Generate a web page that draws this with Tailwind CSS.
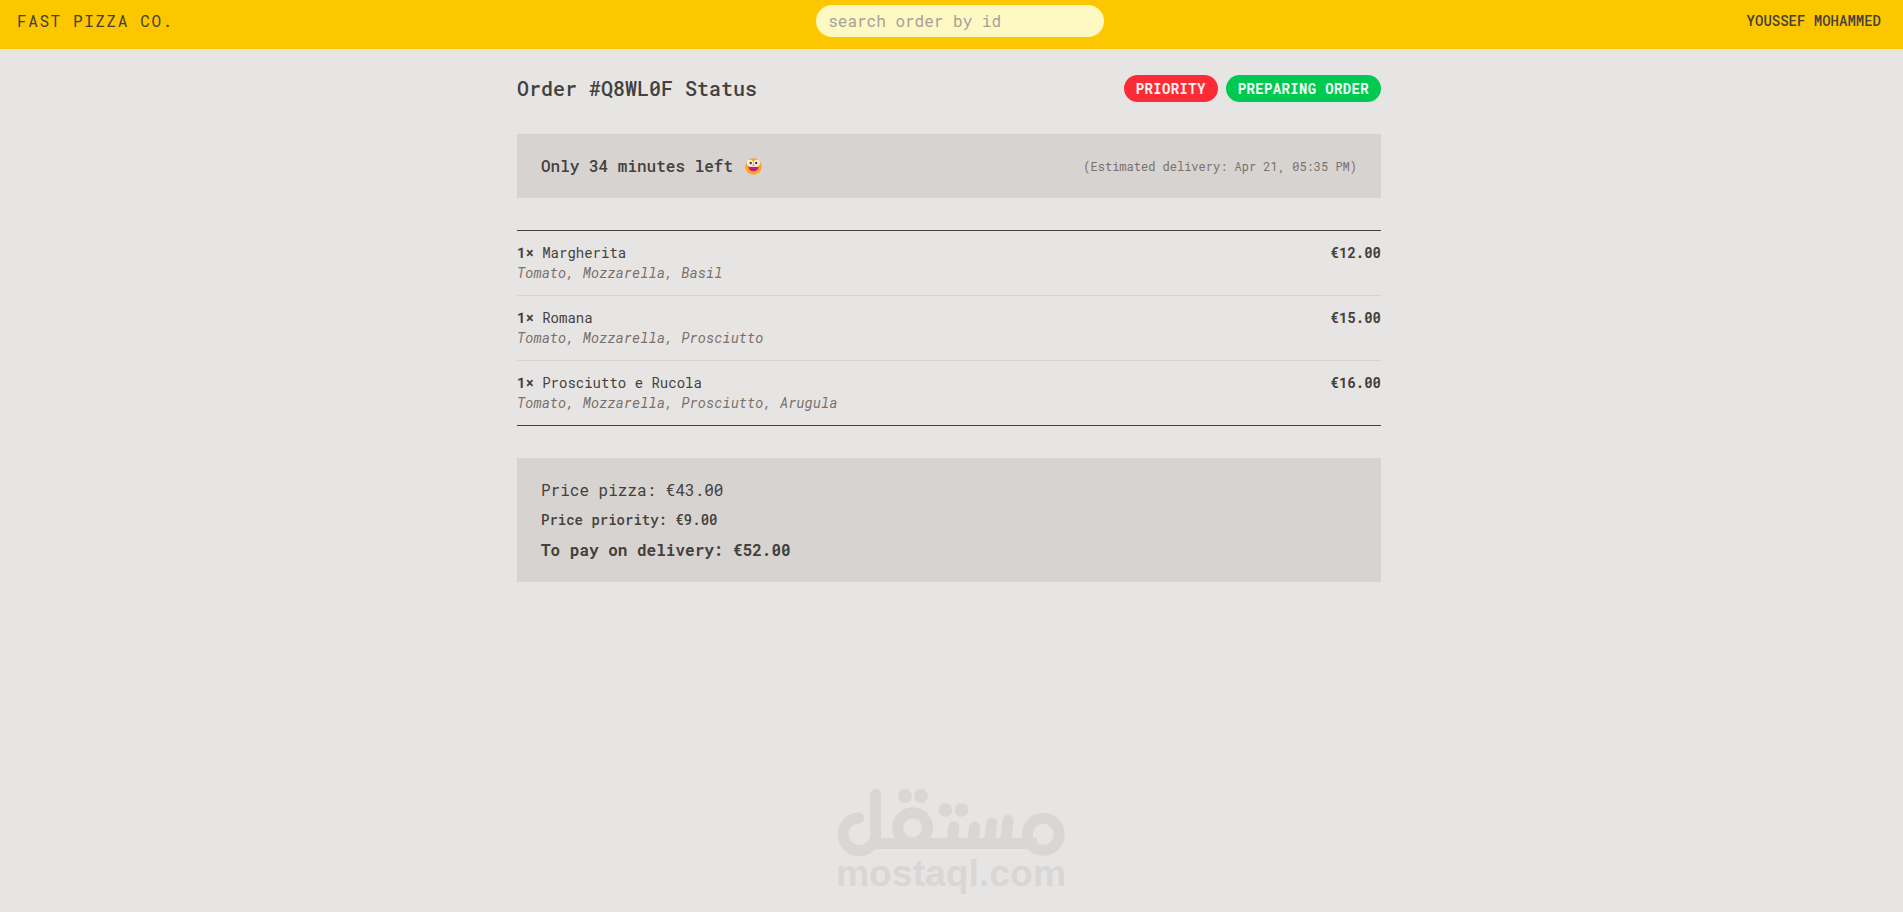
<!DOCTYPE html>
<html lang="en">
<head>
<meta charset="utf-8">
<meta name="viewport" content="width=device-width, initial-scale=1">
<title>Fast Pizza Co. – Order status</title>
<script src="https://cdn.jsdelivr.net/npm/@tailwindcss/browser@4"></script>
</head>
<body class="flex min-h-screen flex-col bg-stone-200 font-['Roboto_Mono','Liberation_Mono',monospace] text-base text-stone-700">
  <header class="flex items-center justify-between bg-yellow-400 pt-[5px] pr-[22px] pb-3 pl-[17px] uppercase">
    <a href="#" class="tracking-widest">Fast Pizza Co.</a>
    <form>
      <input type="text" aria-label="Search order by id" placeholder="search order by id" class="block h-8 w-72 rounded-full bg-yellow-100 px-3 pb-0.5 placeholder:text-stone-400">
    </form>
    <p class="text-sm font-medium">Youssef Mohammed</p>
  </header>

  <main class="grow pr-[5px]">
    <div class="mx-auto max-w-4xl space-y-8 px-4 pt-[25px] pb-6">
      <div class="flex flex-wrap items-end justify-between gap-2">
        <h2 class="text-xl font-medium">Order #Q8WL0F Status</h2>
        <div class="flex gap-2 text-sm leading-[19px] font-bold tracking-wide uppercase">
          <span class="rounded-full bg-red-500 px-3 py-1 text-red-50">Priority</span>
          <span class="rounded-full bg-green-500 px-3 py-1 text-green-50">Preparing order</span>
        </div>
      </div>

      <div class="flex flex-wrap items-center justify-between gap-2 bg-stone-300 px-6 py-5">
        <p class="flex items-center gap-[12px] font-medium">Only 34 minutes left
          <svg role="img" aria-label="Grinning face" class="size-[17px]" viewBox="0 0 17 17">
            <circle cx="8.5" cy="8.5" r="8.2" fill="#fca326"/>
            <circle cx="5" cy="4.900" r="3.100" fill="#fff3d6"/>
            <circle cx="11.800" cy="4.900" r="3.100" fill="#fff3d6"/>
            <circle cx="5.700" cy="5" r="1.200" fill="#4a3a30"/>
            <circle cx="11.200" cy="5" r="1.200" fill="#4a3a30"/>
            <path d="M3.500 8h10c0 3.400-2 5.300-5 5.300S3.500 11.400 3.500 8z" fill="#c4197f"/>
            <path d="M3.500 7.800h10l-.4 1.300H3.900z" fill="#f3e3e4"/>
          </svg>
        </p>
        <p class="text-xs text-stone-500">(Estimated delivery: Apr 21, 05:35 PM)</p>
      </div>

      <ul class="divide-y divide-stone-300 border-y border-stone-700 text-sm">
        <li class="py-3">
          <div class="flex items-center justify-between">
            <p><span class="font-bold">1×</span> Margherita</p>
            <p class="font-bold">€12.00</p>
          </div>
          <p class="text-stone-500 italic">Tomato, Mozzarella, Basil</p>
        </li>
        <li class="py-3">
          <div class="flex items-center justify-between">
            <p><span class="font-bold">1×</span> Romana</p>
            <p class="font-bold">€15.00</p>
          </div>
          <p class="text-stone-500 italic">Tomato, Mozzarella, Prosciutto</p>
        </li>
        <li class="py-3">
          <div class="flex items-center justify-between">
            <p><span class="font-bold">1×</span> Prosciutto e Rucola</p>
            <p class="font-bold">€16.00</p>
          </div>
          <p class="text-stone-500 italic">Tomato, Mozzarella, Prosciutto, Arugula</p>
        </li>
      </ul>

      <div class="space-y-2 bg-stone-300 px-6 py-5">
        <p>Price pizza: €43.00</p>
        <p class="text-sm font-medium">Price priority: €9.00</p>
        <p class="font-bold">To pay on delivery: €52.00</p>
      </div>
    </div>
  </main>

  <footer class="flex justify-center">
    <svg class="h-[142px] w-[260px]" viewBox="6 0 780 426" role="img" aria-label="mostaql.com" fill="none" stroke-linecap="round">
      <g stroke="#d8d7d5" stroke-width="33">
        <path d="M116 144A49 49 0 1 0 167 192V73"/>
        <path d="M150 220.500H650" stroke-linecap="butt"/>
        <circle cx="278" cy="173" r="45"/>
        <path d="M401 171l-4 45M464 171l-5 45M515 159l-7 57M564 151l-7 65"/>
        <circle cx="670" cy="193" r="48"/>
      </g>
      <g fill="#d8d7d5">
        <circle cx="255" cy="78" r="21"/>
        <circle cx="303" cy="78" r="21"/>
        <circle cx="376" cy="120" r="20.500"/>
        <circle cx="425" cy="120" r="20.500"/>
        <text x="393" y="347" text-anchor="middle" font-size="112" font-weight="700" font-family="'Liberation Sans',Arial,sans-serif">mostaql.com</text>
      </g>
    </svg>
  </footer>
</body>
</html>
